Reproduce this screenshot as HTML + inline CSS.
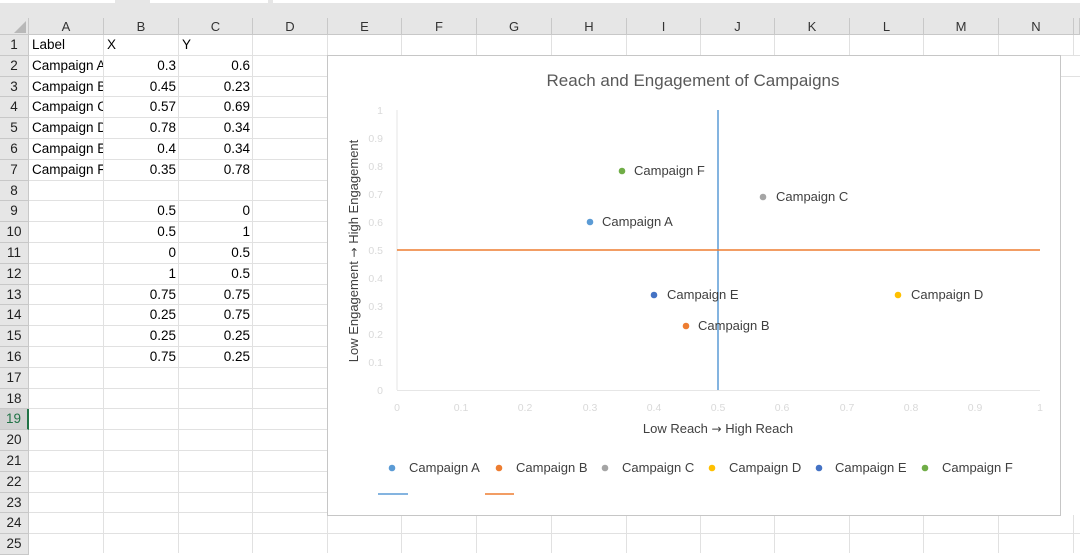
<!DOCTYPE html><html><head><style>
body{margin:0;width:1080px;height:553px;overflow:hidden;background:#fff;font-family:"Liberation Sans",sans-serif;position:relative}
.a{position:absolute}
.ch{position:absolute;top:18px;height:17px;background:#e6e6e6;border-right:1px solid #c8c8c8;border-bottom:1px solid #c8c8c8;box-sizing:border-box;font-size:13px;color:#333;text-align:center;line-height:17px}
.rh{position:absolute;left:0;width:29px;background:#e6e6e6;border-bottom:1px solid #c8c8c8;border-right:1px solid #c8c8c8;box-sizing:border-box;font-size:13.5px;color:#222;text-align:center}
.c{position:absolute;font-size:13.5px;color:#000;white-space:nowrap;overflow:hidden}
</style></head><body>
<div class="a" style="left:0;top:0;width:1080px;height:18px;background:#e6e6e6"></div>
<div class="a" style="left:0;top:0;width:115px;height:3px;background:#fff"></div>
<div class="a" style="left:150px;top:0;width:118px;height:3px;background:#fff"></div>
<div class="a" style="left:273px;top:0;width:807px;height:3px;background:#fff"></div>
<svg class="a" style="left:0;top:0" width="1080" height="553">
<g stroke="#e1e1e1" stroke-width="1">
<line x1="103.5" y1="35" x2="103.5" y2="553"/><line x1="178.5" y1="35" x2="178.5" y2="553"/><line x1="252.5" y1="35" x2="252.5" y2="553"/><line x1="327.5" y1="35" x2="327.5" y2="553"/>
<line x1="401.5" y1="35" x2="401.5" y2="56"/><line x1="476.5" y1="35" x2="476.5" y2="56"/><line x1="551.5" y1="35" x2="551.5" y2="56"/><line x1="626.5" y1="35" x2="626.5" y2="56"/><line x1="700.5" y1="35" x2="700.5" y2="56"/><line x1="774.5" y1="35" x2="774.5" y2="56"/><line x1="849.5" y1="35" x2="849.5" y2="56"/><line x1="923.5" y1="35" x2="923.5" y2="56"/><line x1="998.5" y1="35" x2="998.5" y2="56"/><line x1="1073.5" y1="35" x2="1073.5" y2="56"/>
<line x1="401.5" y1="515" x2="401.5" y2="553"/><line x1="476.5" y1="515" x2="476.5" y2="553"/><line x1="551.5" y1="515" x2="551.5" y2="553"/><line x1="626.5" y1="515" x2="626.5" y2="553"/><line x1="700.5" y1="515" x2="700.5" y2="553"/><line x1="774.5" y1="515" x2="774.5" y2="553"/><line x1="849.5" y1="515" x2="849.5" y2="553"/><line x1="923.5" y1="515" x2="923.5" y2="553"/><line x1="998.5" y1="515" x2="998.5" y2="553"/><line x1="1073.5" y1="515" x2="1073.5" y2="553"/>
<line x1="1060" y1="55.5" x2="1080" y2="55.5"/><line x1="1060" y1="76.5" x2="1080" y2="76.5"/>
</g>
<g id="rows" stroke="#e1e1e1"></g>
</svg>
<div class="a" style="left:0;top:18px;width:29px;height:17px;background:#e6e6e6;border-right:1px solid #c8c8c8;border-bottom:1px solid #c8c8c8;box-sizing:border-box"><svg width="28" height="16"><polygon points="26,3 26,15 14,15" fill="#b8b8b8"/></svg></div>
<div class="ch" style="left:29px;width:75px">A</div><div class="ch" style="left:104px;width:75px">B</div><div class="ch" style="left:179px;width:74px">C</div><div class="ch" style="left:253px;width:75px">D</div><div class="ch" style="left:328px;width:74px">E</div><div class="ch" style="left:402px;width:75px">F</div><div class="ch" style="left:477px;width:75px">G</div><div class="ch" style="left:552px;width:75px">H</div><div class="ch" style="left:627px;width:74px">I</div><div class="ch" style="left:701px;width:74px">J</div><div class="ch" style="left:775px;width:75px">K</div><div class="ch" style="left:850px;width:74px">L</div><div class="ch" style="left:924px;width:75px">M</div><div class="ch" style="left:999px;width:75px">N</div><div class="ch" style="left:1074px;width:6px"></div>
<div id="g"></div>
<script>
var g=document.getElementById('g'),h='',rs='';
var d={1:['Label','X','Y'],2:['Campaign A','0.3','0.6'],3:['Campaign B','0.45','0.23'],4:['Campaign C','0.57','0.69'],5:['Campaign D','0.78','0.34'],6:['Campaign E','0.4','0.34'],7:['Campaign F','0.35','0.78'],9:['','0.5','0'],10:['','0.5','1'],11:['','0','0.5'],12:['','1','0.5'],13:['','0.75','0.75'],14:['','0.25','0.75'],15:['','0.25','0.25'],16:['','0.75','0.25']};
for(var i=1;i<=25;i++){var t=35+(i-1)*20.8,b=t+20.8;
h+='<div class="rh" style="top:'+t+'px;height:20.8px;line-height:20.8px;'+(i==19?'color:#217346;background:#d2d2d2;border-right:2px solid #217346':'')+'">'+i+'</div>';
rs+='<line x1="29" x2="327" y1="'+(Math.round(b)-0.5)+'" y2="'+(Math.round(b)-0.5)+'"/>';
if(b<56||b>515)rs+='<line x1="327" x2="1080" y1="'+(Math.round(b)-0.5)+'" y2="'+(Math.round(b)-0.5)+'"/>';
var r=d[i];if(r){
h+='<div class="c" style="left:32px;top:'+t+'px;width:71px;line-height:20.8px">'+r[0]+'</div>';
if(i==1){h+='<div class="c" style="left:107px;top:'+t+'px;line-height:20.8px">X</div><div class="c" style="left:182px;top:'+t+'px;line-height:20.8px">Y</div>';}
else{h+='<div class="c" style="left:104px;top:'+t+'px;width:72px;text-align:right;line-height:20.8px">'+r[1]+'</div><div class="c" style="left:179px;top:'+t+'px;width:71px;text-align:right;line-height:20.8px">'+r[2]+'</div>';}}}
g.innerHTML=h;document.getElementById('rows').innerHTML=rs;
</script>
<svg class="a" style="left:327px;top:55px" width="734" height="461" font-family="Liberation Sans, sans-serif">
<rect x="0.5" y="0.5" width="733" height="460" fill="#fff" stroke="#c6c6c6"/>
<text x="366" y="31" text-anchor="middle" font-size="17" fill="#595959">Reach and Engagement of Campaigns</text>
<g font-size="10.5" fill="#d9d9d9" text-anchor="end">
<text x="56" y="339">0</text><text x="56" y="311">0.1</text><text x="56" y="283">0.2</text><text x="56" y="255">0.3</text><text x="56" y="227">0.4</text><text x="56" y="199">0.5</text><text x="56" y="171">0.6</text><text x="56" y="143">0.7</text><text x="56" y="115">0.8</text><text x="56" y="87">0.9</text><text x="56" y="59">1</text></g>
<g font-size="10.5" fill="#d9d9d9" text-anchor="middle">
<text x="70" y="356">0</text><text x="134" y="356">0.1</text><text x="198" y="356">0.2</text><text x="263" y="356">0.3</text><text x="327" y="356">0.4</text><text x="391" y="356">0.5</text><text x="455" y="356">0.6</text><text x="520" y="356">0.7</text><text x="584" y="356">0.8</text><text x="648" y="356">0.9</text><text x="713" y="356">1</text></g>
<line x1="70" y1="55" x2="70" y2="335" stroke="#e6e6e6"/><line x1="70" y1="335.5" x2="713" y2="335.5" stroke="#e6e6e6"/>
<line x1="391" y1="55" x2="391" y2="335" stroke="#5b9bd5" stroke-width="1.5"/>
<line x1="70" y1="195" x2="713" y2="195" stroke="#ed7d31" stroke-width="1.5"/>
<text transform="translate(31,196) rotate(-90)" text-anchor="middle" font-size="13" fill="#404040">Low Engagement <tspan font-family="DejaVu Sans" font-size="12">→</tspan> High Engagement</text>
<text x="391" y="378" text-anchor="middle" font-size="13" fill="#404040">Low Reach <tspan font-family="DejaVu Sans" font-size="12">→</tspan> High Reach</text>
<g font-size="13" fill="#404040">
<circle cx="263" cy="167" r="3.3" fill="#5b9bd5"/><text x="275" y="171">Campaign A</text>
<circle cx="359" cy="271" r="3.3" fill="#ed7d31"/><text x="371" y="275">Campaign B</text>
<circle cx="436" cy="142" r="3.3" fill="#a5a5a5"/><text x="449" y="146">Campaign C</text>
<circle cx="571" cy="240" r="3.3" fill="#ffc000"/><text x="584" y="244">Campaign D</text>
<circle cx="327" cy="240" r="3.3" fill="#4472c4"/><text x="340" y="244">Campaign E</text>
<circle cx="295" cy="116" r="3.3" fill="#70ad47"/><text x="307" y="120">Campaign F</text>
<circle cx="65" cy="413" r="3.3" fill="#5b9bd5"/><text x="82" y="417">Campaign A</text>
<circle cx="172" cy="413" r="3.3" fill="#ed7d31"/><text x="189" y="417">Campaign B</text>
<circle cx="278" cy="413" r="3.3" fill="#a5a5a5"/><text x="295" y="417">Campaign C</text>
<circle cx="385" cy="413" r="3.3" fill="#ffc000"/><text x="402" y="417">Campaign D</text>
<circle cx="492" cy="413" r="3.3" fill="#4472c4"/><text x="508" y="417">Campaign E</text>
<circle cx="598" cy="413" r="3.3" fill="#70ad47"/><text x="615" y="417">Campaign F</text>
</g>
<line x1="51" y1="439" x2="81" y2="439" stroke="#5b9bd5" stroke-width="1.5"/>
<line x1="158" y1="439" x2="187" y2="439" stroke="#ed7d31" stroke-width="1.5"/>
</svg>
</body></html>
